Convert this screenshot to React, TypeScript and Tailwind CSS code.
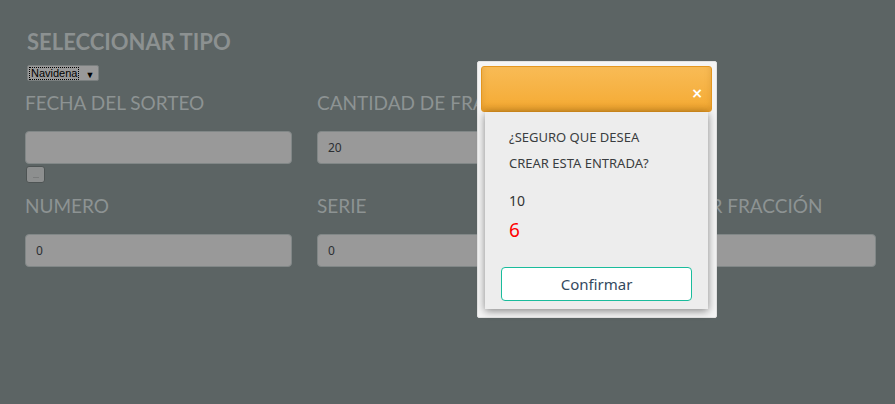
import React from "react";

const labelCls =
  "block text-[19px] leading-[24px] text-[#8d9393] whitespace-nowrap font-['Lato',sans-serif]";
const inputCls =
  "h-[33px] w-full rounded-[4px] border border-[#818787] bg-[#999999] px-[10px] flex items-center text-[12px] text-[#2c2f33] font-['Noto_Sans',sans-serif]";

const Field = ({ label, value }: { label: string; value?: string }) => (
  <div>
    <span className={labelCls}>{label}</span>
    <div className="mt-[16px]">
      <div className={inputCls}>{value}</div>
    </div>
  </div>
);

const ConfirmModal = () => (
  <div className="absolute left-[477px] top-[61px] w-[240px] h-[257px] bg-[#f4f4f4] border border-[#e2e2e2] rounded-[2px]">
    {/* header */}
    <div className="mx-[3px] mt-[4px] w-[231px] h-[46px] rounded-[3px] border border-[#e4961f] bg-gradient-to-b from-[#f8bb55] to-[#f5aa31] flex items-end justify-end pb-[11px] pr-[8px] shadow-[inset_0_-4px_6px_rgba(160,100,20,0.25)]">
      <span className="text-white font-bold text-[14px] leading-none font-['DejaVu_Sans',sans-serif]">
        ×
      </span>
    </div>
    {/* body */}
    <div className="ml-[7px] w-[223px] h-[197px] bg-[#ededed] shadow-[0_2px_8px_rgba(0,0,0,0.45)] pt-[12px] px-[24px] font-['Noto_Sans',sans-serif]">
      <p className="text-[13px] leading-[26px] text-[#3a3d40]">
        ¿SEGURO QUE DESEA
        <br />
        CREAR ESTA ENTRADA?
      </p>
      <p className="mt-[15px] text-[14px] leading-[20px] text-[#333]">10</p>
      <p className="mt-[8px] text-[19px] leading-[22px] text-[#ff0000]">6</p>
      <button className="mt-[26px] -ml-[8px] w-[191px] h-[34px] rounded-[4px] border border-[#1abc9c] bg-white text-[15px] text-[#34495e] font-['Noto_Sans',sans-serif]">
        Confirmar
      </button>
    </div>
  </div>
);

export default function App() {
  return (
    <div className="relative w-[895px] h-[404px] overflow-hidden bg-[#5c6464] font-['Lato',sans-serif]">
      <div className="pl-[25px] pt-[29px] w-[876px]">
        <h2 className="pl-[2px] text-[22px] leading-[26px] font-bold text-[#8c9191]">
          SELECCIONAR TIPO
        </h2>
        {/* select */}
        <div className="mt-[10px] ml-[2px] w-[72px] h-[16px] flex items-center border border-[#7a7f7f] bg-[#999999] rounded-[2px]">
          <span className="ml-[1px] h-[13px] px-[1px] border border-dotted border-black text-[11px] leading-[11px] text-black font-['Liberation_Sans',sans-serif]">
            Navidena
          </span>
          <span className="ml-[6px] mt-[3px] text-[9px] leading-none text-black">▼</span>
        </div>

        <div className="mt-[10px] grid grid-cols-3 gap-x-[25px]">
          <div>
            <Field label="FECHA DEL SORTEO" />
            <div className="mt-[2px] ml-[1px] w-[19px] h-[17px] rounded-[3px] border border-[#4e5454] bg-[#8d8f8f] flex items-center justify-center">
              <span className="mt-[5px] w-[6px] h-[1px] bg-[#7a7c7c]" />
            </div>
          </div>
          <Field label="CANTIDAD DE FRACCIONES" value="20" />
          <div />
        </div>

        <div className="mt-[11px] grid grid-cols-3 gap-x-[25px]">
          <Field label="NUMERO" value="0" />
          <Field label="SERIE" value="0" />
          <div className="pl-[9px]">
            <span className={labelCls}>VALOR POR FRACCIÓN</span>
            <div className="mt-[16px] -ml-[9px]">
              <div className={inputCls} />
            </div>
          </div>
        </div>
      </div>

      <ConfirmModal />
    </div>
  );
}
